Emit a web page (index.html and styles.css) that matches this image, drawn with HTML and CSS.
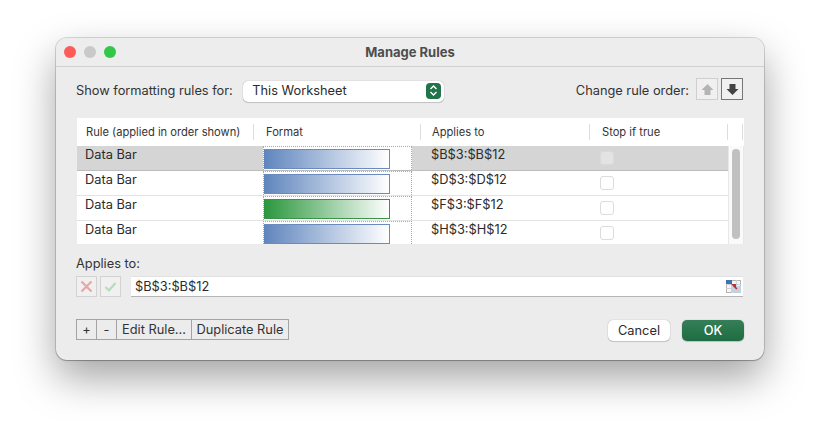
FILE: index.html
```html
<!DOCTYPE html>
<html lang="en">
<head>
  <meta charset="UTF-8" />
  <title>Manage Rules</title>
  <link rel="stylesheet" href="styles.css">
</head>
<body>

<div class="window">
  <div class="titlebar">
    <div class="lights">
      <span class="light red"></span>
      <span class="light gray"></span>
      <span class="light green"></span>
    </div>
    <div class="title">Manage Rules</div>
  </div>

  <div class="content">
    <div class="top-row">
      <span class="label">Show formatting rules for:</span>
      <div class="select">
        <span>This Worksheet</span>
        <span class="select-arrows">
          <svg width="9" height="13" viewBox="0 0 9 13"><path d="M1.5 5 4.5 2 7.5 5M1.5 8 4.5 11 7.5 8" fill="none" stroke="#fff" stroke-width="1.4"/></svg>
        </span>
      </div>
      <span class="label order-label">Change rule order:</span>
      <button class="order-btn disabled">
        <svg width="13" height="13" viewBox="0 0 13 13"><path d="M6.5 1 12.5 7H9.5v5h-6V7H.5z" fill="#b4b4b4"/></svg>
      </button>
      <button class="order-btn">
        <svg width="13" height="13" viewBox="0 0 13 13"><path d="M6.5 12 12.5 6H9.5V1h-6v5H.5z" fill="#444"/></svg>
      </button>
    </div>

    <div class="rules">
      <div class="rules-head">
        <div class="head-cell col-rule">Rule (applied in order shown)</div>
        <div class="head-cell col-format">Format</div>
        <div class="head-cell col-applies">Applies to</div>
        <div class="head-cell col-stop">Stop if true</div>
        <div class="head-cell col-end"></div>
      </div>
      <div class="rules-body">
        <div class="rows">
          <div class="row selected">
            <div class="col-rule">Data Bar</div>
            <div class="col-format"><div class="swatch"><div class="bar blue"></div></div></div>
            <div class="col-applies">$B$3:$B$12</div>
            <div class="col-stop"><span class="check"></span></div>
          </div>
          <div class="row">
            <div class="col-rule">Data Bar</div>
            <div class="col-format"><div class="swatch"><div class="bar blue"></div></div></div>
            <div class="col-applies">$D$3:$D$12</div>
            <div class="col-stop"><span class="check"></span></div>
          </div>
          <div class="row">
            <div class="col-rule">Data Bar</div>
            <div class="col-format"><div class="swatch"><div class="bar green"></div></div></div>
            <div class="col-applies">$F$3:$F$12</div>
            <div class="col-stop"><span class="check"></span></div>
          </div>
          <div class="row last">
            <div class="col-rule">Data Bar</div>
            <div class="col-format"><div class="swatch"><div class="bar blue"></div></div></div>
            <div class="col-applies">$H$3:$H$12</div>
            <div class="col-stop"><span class="check"></span></div>
          </div>
        </div>
        <div class="scrollbar"><div class="thumb"></div></div>
      </div>
    </div>

    <div class="label applies-label">Applies to:</div>
    <div class="applies-row">
      <button class="mark-btn">
        <svg width="13" height="13" viewBox="0 0 13 13"><path d="M1.5 1.5 11.5 11.5M11.5 1.5 1.5 11.5" fill="none" stroke="#eba5a5" stroke-width="2.2"/></svg>
      </button>
      <button class="mark-btn">
        <svg width="13" height="13" viewBox="0 0 13 13"><path d="M1.5 7 5 10.5 11.5 3" fill="none" stroke="#b5dcbb" stroke-width="2.2"/></svg>
      </button>
      <div class="range-input">
        <span>$B$3:$B$12</span>
        <svg class="range-icon" width="15" height="13" viewBox="0 0 15 13">
          <rect x=".5" y=".5" width="14" height="12" fill="#f5f5f5" stroke="#b4b4b4"/>
          <rect x="6" y="6" width="9" height="7" fill="#bcd3ea"/>
          <path d="M0 4.5h15M0 8.5h15M5.5 0v13M10.5 0v13" stroke="#cfcfcf"/>
          <rect x="0" y="0" width="6" height="4" fill="#3f70b8"/>
          <path d="M5 4h5v5z" fill="#b8343a"/>
          <path d="M7 5l4 4" stroke="#b8343a" stroke-width="1.4"/>
        </svg>
      </div>
    </div>

    <div class="bottom-row">
      <div class="tool-group">
        <button class="tool-btn small">+</button>
        <button class="tool-btn small">-</button>
        <button class="tool-btn edit">Edit Rule...</button>
        <button class="tool-btn dup">Duplicate Rule</button>
      </div>
      <div class="actions">
        <button class="action-btn">Cancel</button>
        <button class="action-btn primary">OK</button>
      </div>
    </div>
  </div>
</div>

</body>
</html>
```

FILE: styles.css
```css
* {
  box-sizing: border-box;
}
body {
  margin: 0;
  height: 434px;
  overflow: hidden;
  padding: 38px 56px 0;
  background-color: #fff;
  font-family: "Inter", "Liberation Sans", sans-serif;
  font-size: 12.8px;
  color: #2b2b2b;
}
button {
  font-family: inherit;
  padding: 0;
}

.window {
  width: 708px;
  height: 322px;
  background-color: #ececec;
  border-radius: 11px;
  box-shadow: 0 0 0 1px rgba(0, 0, 0, 0.14), 0 1px 1px rgba(0, 0, 0, 0.2), 0 18px 40px rgba(0, 0, 0, 0.36);
}

.titlebar {
  display: flex;
  align-items: center;
  height: 29px;
  padding-left: 8px;
  border-bottom: 1px solid #d0d0d0;
  background-color: #ededed;
  border-radius: 11px 11px 0 0;
}
.lights {
  display: flex;
  gap: 8px;
  width: 52px;
}
.light {
  width: 12px;
  height: 12px;
  border-radius: 50%;
}
.red { background-color: #fc5b57; }
.gray { background-color: #c9c9c9; }
.green { background-color: #33c748; }
.title {
  flex: 1;
  text-align: center;
  padding-right: 60px;
  font-size: 13px;
  font-weight: 700;
  color: #4d4d4d;
}

.content {
  padding: 12px 20px 0 20px;
}
.top-row {
  display: flex;
  align-items: center;
  height: 22px;
}
.label {
  color: #333;
}
.select {
  display: flex;
  align-items: center;
  justify-content: space-between;
  width: 201px;
  height: 21px;
  margin: 2px 0 0 10.5px;
  padding: 0 3px 1px 9px;
  background-color: #fff;
  border-radius: 5px;
  box-shadow: 0 0 1px rgba(0, 0, 0, 0.4), 0 1px 1px rgba(0, 0, 0, 0.15);
}
.select-arrows {
  display: flex;
  align-items: center;
  justify-content: center;
  width: 15px;
  height: 16px;
  background-color: #22734a;
  border-radius: 4px;
}
.order-label {
  margin-left: auto;
  margin-right: 7px;
}
.order-btn {
  display: flex;
  align-items: center;
  justify-content: center;
  width: 22px;
  height: 22px;
  margin: -2px 1px 0 3px;
  background-color: #f0f0f0;
  border: 1px solid #777;
}
.order-btn.disabled {
  margin-left: 0;
  margin-right: 0;
  border-color: #cfcfcf;
}

.rules {
  width: 667px;
  margin: 17px 0 0 1px;
  background-color: #fff;
}
.rules-head {
  display: flex;
  align-items: center;
  height: 28px;
  font-size: 11.15px;
  color: #333;
}
.head-cell {
  height: 16px;
  line-height: 16px;
  border-right: 1px solid #ddd;
}
.col-rule {
  width: 177px;
  padding-left: 9px;
}
.col-format {
  width: 167px;
  padding-left: 12px;
}
.col-applies {
  width: 169px;
  padding-left: 11px;
}
.col-stop {
  width: 138px;
  padding-left: 12px;
}
.col-end {
  width: 15px;
}
.rules-body {
  display: flex;
  height: 98px;
}
.rows {
  width: 651px;
}
.row {
  display: flex;
  height: 25px;
  border-bottom: 1px solid #e3e3e3;
}
.row.last {
  height: 23px;
  border-bottom: none;
}
.row.selected {
  background-color: #d5d5d5;
  border-bottom-color: #bdbdbd;
}
.row > .col-rule {
  padding-left: 8px;
  line-height: 18px;
}
.row > .col-format {
  padding-left: 9px;
}
.row > .col-applies {
  padding-left: 10px;
  line-height: 18px;
}
.row > .col-stop {
  padding-left: 10px;
}
.swatch {
  width: 149px;
  height: 100%;
  padding: 2px 21px 0 0;
  background-color: #fff;
  border: 1px dotted #aaa;
  border-bottom: none;
}
.bar {
  height: 20px;
  border: 1px solid #6b8abd;
}
.bar.blue {
  border-left: none;
  background: linear-gradient(to right, #5f85bd, #fff);
}
.bar.green {
  border-color: #3a9448;
  border-left: none;
  background: linear-gradient(to right, #2a963c, #fff);
}
.col-stop {
  display: flex;
}
.check {
  width: 14px;
  height: 14px;
  margin-top: 5px;
  background-color: #fff;
  border: 1px solid #dcdcdc;
  border-radius: 3px;
}
.row.selected .check {
  background-color: #e3e3e3;
  border-color: #dadada;
}
.scrollbar {
  width: 16px;
  padding: 3px 3px 5px 3px;
  background-color: #fafafa;
  border-left: 1px solid #e8e8e8;
  border-right: 1px solid #e8e8e8;
}
.thumb {
  width: 8px;
  height: 90px;
  background-color: #c0c0c0;
  border-radius: 4px;
}

.applies-label {
  margin-top: 12px;
  line-height: 16px;
}
.applies-row {
  display: flex;
  margin-top: 4px;
}
.mark-btn {
  display: flex;
  align-items: center;
  justify-content: center;
  width: 21px;
  height: 21px;
  margin-right: 3px;
  background-color: #f0f0f0;
  border: 1px solid #d2d2d2;
}
.range-input {
  display: flex;
  align-items: center;
  justify-content: space-between;
  width: 612px;
  height: 21px;
  margin-left: 7px;
  padding: 0 2px 0 4px;
  background-color: #fff;
  border-bottom: 1px solid #b5b5b5;
  border-top: 1px solid #e2e2e2;
}

.bottom-row {
  display: flex;
  justify-content: space-between;
  align-items: flex-end;
  margin-top: 22px;
}
.tool-group {
  display: flex;
}
.tool-btn {
  height: 21px;
  font-size: 12.8px;
  color: #333;
  background-color: #ececec;
  border: 1px solid #a3a3a3;
  margin-right: -1px;
}
.tool-btn.small { width: 21px; }
.tool-btn.edit { width: 76px; }
.tool-btn.dup { width: 98px; margin-right: 0; }
.actions {
  display: flex;
  gap: 12px;
  margin-bottom: -1px;
}
.action-btn {
  width: 62px;
  height: 21px;
  font-size: 12.8px;
  color: #2b2b2b;
  background-color: #fff;
  border: none;
  border-radius: 5px;
  box-shadow: 0 0 1px rgba(0, 0, 0, 0.4), 0 1px 1px rgba(0, 0, 0, 0.15);
}
.action-btn.primary {
  color: #fff;
  font-weight: 500;
  background: linear-gradient(to bottom, #347f57, #1f6b42);
}
```
